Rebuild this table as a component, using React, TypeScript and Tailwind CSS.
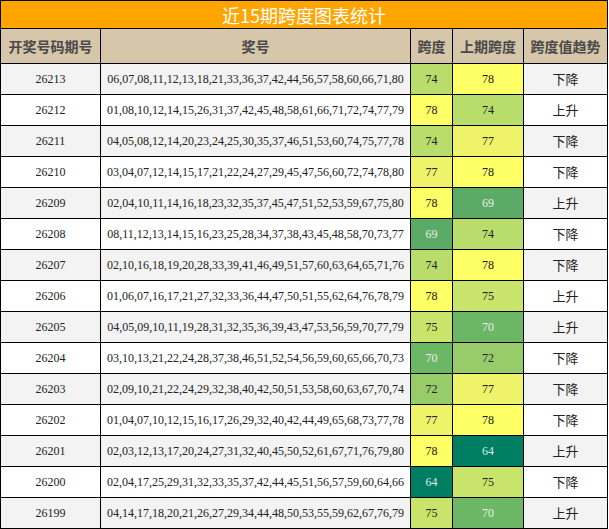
import React from 'react';

type Row = { qh: string; nums: string; kd: number; prev: number; trend: string };

const rows: Row[] = [
    { qh: '26213', nums: '06,07,08,11,12,13,18,21,33,36,37,42,44,56,57,58,60,66,71,80', kd: 74, prev: 78, trend: '下降' },
    { qh: '26212', nums: '01,08,10,12,14,15,26,31,37,42,45,48,58,61,66,71,72,74,77,79', kd: 78, prev: 74, trend: '上升' },
    { qh: '26211', nums: '04,05,08,12,14,20,23,24,25,30,35,37,46,51,53,60,74,75,77,78', kd: 74, prev: 77, trend: '下降' },
    { qh: '26210', nums: '03,04,07,12,14,15,17,21,22,24,27,29,45,47,56,60,72,74,78,80', kd: 77, prev: 78, trend: '下降' },
    { qh: '26209', nums: '02,04,10,11,14,16,18,23,32,35,37,45,47,51,52,53,59,67,75,80', kd: 78, prev: 69, trend: '上升' },
    { qh: '26208', nums: '08,11,12,13,14,15,16,23,25,28,34,37,38,43,45,48,58,70,73,77', kd: 69, prev: 74, trend: '下降' },
    { qh: '26207', nums: '02,10,16,18,19,20,28,33,39,41,46,49,51,57,60,63,64,65,71,76', kd: 74, prev: 78, trend: '下降' },
    { qh: '26206', nums: '01,06,07,16,17,21,27,32,33,36,44,47,50,51,55,62,64,76,78,79', kd: 78, prev: 75, trend: '上升' },
    { qh: '26205', nums: '04,05,09,10,11,19,28,31,32,35,36,39,43,47,53,56,59,70,77,79', kd: 75, prev: 70, trend: '上升' },
    { qh: '26204', nums: '03,10,13,21,22,24,28,37,38,46,51,52,54,56,59,60,65,66,70,73', kd: 70, prev: 72, trend: '下降' },
    { qh: '26203', nums: '02,09,10,21,22,24,29,32,38,40,42,50,51,53,58,60,63,67,70,74', kd: 72, prev: 77, trend: '下降' },
    { qh: '26202', nums: '01,04,07,10,12,15,16,17,26,29,32,40,42,44,49,65,68,73,77,78', kd: 77, prev: 78, trend: '下降' },
    { qh: '26201', nums: '02,03,12,13,17,20,24,27,31,32,40,45,50,52,61,67,71,76,79,80', kd: 78, prev: 64, trend: '上升' },
    { qh: '26200', nums: '02,04,17,25,29,31,32,33,35,37,42,44,45,51,56,57,59,60,64,66', kd: 64, prev: 75, trend: '下降' },
    { qh: '26199', nums: '04,14,17,18,20,21,26,27,29,34,44,48,50,53,55,59,62,67,76,79', kd: 75, prev: 70, trend: '上升' },
];

// colour scale for the span value cells
const scale: Record<number, string> = {
    78: 'bg-[#ffff66] text-[#222]',
    77: 'bg-[#eef36a] text-[#222]',
    75: 'bg-[#c9e46a] text-[#222]',
    74: 'bg-[#b9dd6a] text-[#222]',
    72: 'bg-[#98cc6a] text-[#222]',
    70: 'bg-[#6cb766] text-[#e8efe8]',
    69: 'bg-[#5bab66] text-[#e8efe8]',
    64: 'bg-[#007e64] text-[#dfeee8]',
};

const cjk = "font-['Noto_Sans_CJK_SC','Noto_Sans',sans-serif]";
const num = "font-['Liberation_Serif',serif]";

export default function App() {
    return (
        <div className="bg-white w-[609px]">
            <table className="w-[608px] border-collapse border border-black table-fixed">
                <colgroup>
                    <col className="w-[100px]" />
                    <col className="w-[310px]" />
                    <col className="w-[42px]" />
                    <col className="w-[71px]" />
                    <col />
                </colgroup>
                <thead>
                    <tr className="h-[28px]">
                        <th colSpan={5} className={`border border-black bg-[#ffa500] text-white text-[18px] font-normal p-0 leading-none ${cjk}`}>
                            近15期跨度图表统计
                        </th>
                    </tr>
                    <tr className={`h-[35px] bg-[#d6c6aa] text-[#4a4a4a] text-[14px] font-bold ${cjk}`}>
                        <th className="border border-black p-0">开奖号码期号</th>
                        <th className="border border-black p-0">奖号</th>
                        <th className="border border-black p-0">跨度</th>
                        <th className="border border-black p-0">上期跨度</th>
                        <th className="border border-black p-0">跨度值趋势</th>
                    </tr>
                </thead>
                <tbody>
                    {rows.map((r, i) => (
                        <tr key={r.qh} className={`h-[31px] text-center text-[#222] ${i % 2 === 0 ? 'bg-[#f3f3f3]' : 'bg-white'}`}>
                            <td className={`border border-black p-0 text-[12px] ${num}`}>{r.qh}</td>
                            <td className={`border border-black p-0 text-[12px] ${num}`}>{r.nums}</td>
                            <td className={`border border-black p-0 text-[12px] ${num} ${scale[r.kd]}`}>{r.kd}</td>
                            <td className={`border border-black p-0 text-[12px] ${num} ${scale[r.prev]}`}>{r.prev}</td>
                            <td className={`border border-black p-0 text-[13px] ${cjk}`}>{r.trend}</td>
                        </tr>
                    ))}
                </tbody>
            </table>
        </div>
    );
}
